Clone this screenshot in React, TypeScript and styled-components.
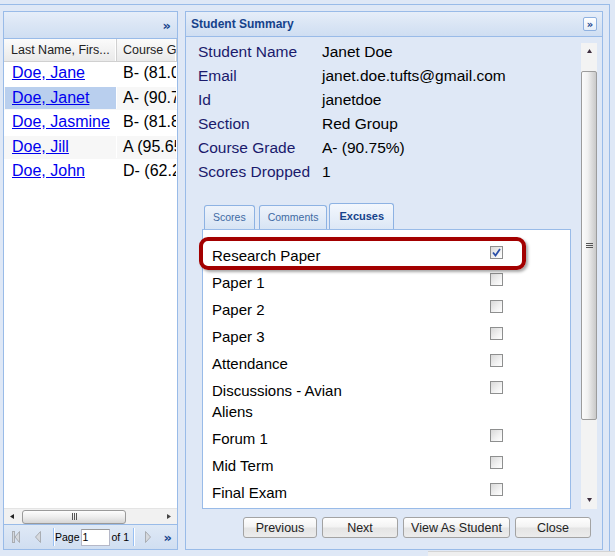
import React from "react";
import styled, { createGlobalStyle } from "styled-components";

const Global = createGlobalStyle`
  html, body { margin: 0; padding: 0; background: #dfe8f6; }
  body { font-family: "Liberation Sans", Arial, sans-serif; }
  * { box-sizing: border-box; }
`;

const Root = styled.div`
  width: 615px;
  height: 556px;
  padding-top: 4px;
  background: #dfe8f6;
  overflow: hidden;
  position: relative;
`;

const Frame = styled.div`
  width: 610px;
  height: 547px;
  border-top: 1px solid #99bbe8;
  border-right: 1px solid #99bbe8;
  display: flex;
  gap: 7px;
  padding: 6px 6px 0 3px;
`;

const StatusStrip = styled.div`
  position: absolute;
  left: 428px;
  right: 0;
  top: 551px;
  bottom: 0;
  background: #efefef;
  border-top: 1px solid #d4d4d4;
`;

const Panel = styled.div<{ $w?: number }>`
  display: flex;
  flex-direction: column;
  height: 539px;
  ${(p) => (p.$w ? `width: ${p.$w}px; flex: none;` : `flex: 1;`)}
  border: 1px solid #99bbe8;
  background: #dfe8f6;
  overflow: hidden;
`;

const PanelHeader = styled.div<{ $h: number; $pr: number }>`
  flex: none;
  height: ${(p) => p.$h}px;
  display: flex;
  align-items: center;
  justify-content: space-between;
  padding: 0 ${(p) => p.$pr}px 0 5px;
  border-bottom: 1px solid #99bbe8;
  background: linear-gradient(#e6eef9 0%, #dbe6f5 45%, #cfdef2 100%);
`;

const HeaderTitle = styled.span`
  font-size: 12px;
  font-weight: bold;
  color: #15428b;
`;

const Chevrons = styled.span`
  font-size: 13px;
  font-weight: bold;
  color: #15428b;
  letter-spacing: -2px;
  line-height: 1;
  font-family: "DejaVu Sans", sans-serif;
`;

const ToolBtn = styled.span`
  width: 14px;
  height: 14px;
  border: 1px solid #8fb1e0;
  border-radius: 2px;
  background: linear-gradient(#ffffff, #e6eef9);
  display: flex;
  align-items: center;
  justify-content: center;
  font-size: 10px;
  font-weight: bold;
  color: #15428b;
  letter-spacing: -2px;
  padding-right: 2px;
  font-family: "DejaVu Sans", sans-serif;
`;

/* ---------- left grid ---------- */

const GridHeader = styled.div`
  flex: none;
  height: 23px;
  display: flex;
  border-bottom: 1px solid #d0d0d0;
  background: linear-gradient(#fbfbfb, #e9e9e9);
`;

const HeadCell = styled.div<{ $w: number; $pl: number }>`
  flex: none;
  width: ${(p) => p.$w}px;
  padding-left: ${(p) => p.$pl}px;
  font-size: 12.5px;
  color: #222;
  line-height: 22px;
  white-space: nowrap;
  overflow: hidden;
  border-right: 1px solid #d0d0d0;
  box-shadow: inset -1px 0 0 #fff;
`;

const GridBody = styled.div`
  flex: 1;
  background: #fff;
  overflow: hidden;
`;

const GridRow = styled.div<{ $alt: boolean }>`
  height: 24.5px;
  display: flex;
  background: ${(p) => (p.$alt ? "#f7f7f7" : "#fff")};
  border-bottom: 1px solid #fff;
`;

const Cell = styled.div<{ $w: number; $sel?: boolean; $pl: number }>`
  flex: none;
  width: ${(p) => p.$w}px;
  height: 22.5px;
  padding: 1px 0 0 ${(p) => p.$pl}px;
  font-size: 16px;
  line-height: 20px;
  white-space: nowrap;
  overflow: hidden;
  color: #000;
  border-right: 1px solid #fff;
  background: ${(p) => (p.$sel ? "#b9cfee" : "transparent")};
  margin-left: 1px;
`;

const NameLink = styled.a`
  color: #0000ee;
  text-decoration: underline;
  cursor: pointer;
`;

const HScroll = styled.div`
  flex: none;
  height: 16px;
  display: flex;
  align-items: center;
  background: #f1f1f1;
  border-top: 1px solid #e4e4e4;
`;

const ArrowBox = styled.div<{ $w: number; $h: number }>`
  flex: none;
  width: ${(p) => p.$w}px;
  height: ${(p) => p.$h}px;
  display: flex;
  align-items: center;
  justify-content: center;
`;

const HTrack = styled.div`
  flex: 1;
  height: 100%;
  display: flex;
  align-items: center;
`;

const HThumb = styled.div`
  margin-left: 2px;
  width: 104px;
  height: 14px;
  border: 1px solid #9a9a9a;
  border-radius: 3px;
  background: linear-gradient(#fdfdfd 0%, #ededed 50%, #d6d6d6 100%);
  display: flex;
  align-items: center;
  justify-content: center;
`;

const Grip = styled.span<{ $vertical?: boolean }>`
  display: flex;
  flex-direction: ${(p) => (p.$vertical ? "column" : "row")};
  gap: 1px;
  & > i {
    display: block;
    background: #555;
    width: ${(p) => (p.$vertical ? "7px" : "1px")};
    height: ${(p) => (p.$vertical ? "1px" : "7px")};
  }
`;

const PagingBar = styled.div`
  flex: none;
  height: 25px;
  display: flex;
  align-items: center;
  padding-left: 8px;
  border-top: 1px solid #99bbe8;
  background: linear-gradient(#dfe9f6, #d0def1);
  font-size: 10.5px;
  color: #000;
`;

const PageIcon = styled.span<{ $ml?: number; $mr?: number }>`
  display: flex;
  margin-left: ${(p) => p.$ml ?? 0}px;
  margin-right: ${(p) => p.$mr ?? 0}px;
`;

const Sep = styled.span<{ $ml?: number; $mr?: number }>`
  width: 2px;
  height: 18px;
  margin-left: ${(p) => p.$ml ?? 0}px;
  margin-right: ${(p) => p.$mr ?? 0}px;
  border-left: 1px solid #98c0f4;
  border-right: 1px solid #fff;
`;

const PageInput = styled.span`
  width: 29px;
  height: 17px;
  margin-left: 1px;
  background: #fff;
  border: 1px solid #b5b8c8;
  border-top-color: #999;
  line-height: 15px;
  padding-left: 1px;
  font-size: 10.5px;
`;

const PageText = styled.span<{ $ml?: number }>`
  margin-left: ${(p) => p.$ml ?? 0}px;
`;

const PushRight = styled.span`
  margin-left: auto;
  margin-right: 7px;
`;

/* ---------- right panel ---------- */

const RightBody = styled.div`
  flex: 1;
  display: flex;
  flex-direction: column;
  padding-top: 3px;
`;

const ScrollArea = styled.div`
  flex: none;
  height: 469px;
  display: flex;
`;

const Content = styled.div`
  flex: 1;
  padding-left: 12px;
  overflow: hidden;
`;

const InfoGrid = styled.div`
  display: grid;
  grid-template-columns: 124px 1fr;
  grid-auto-rows: 24px;
  font-size: 15.5px;
  line-height: 24px;
`;

const InfoLabel = styled.div`
  color: #1a1a6c;
  white-space: nowrap;
`;

const InfoValue = styled.div`
  color: #000;
  white-space: nowrap;
`;

const TabWrap = styled.div`
  margin-top: 19px;
  margin-left: 4px;
  width: 369px;
`;

const TabStrip = styled.div`
  height: 26px;
  display: flex;
  align-items: flex-end;
  padding-left: 2px;
  gap: 4px;
`;

const Tab = styled.div<{ $active?: boolean }>`
  height: ${(p) => (p.$active ? 26 : 24)}px;
  padding: 0 ${(p) => (p.$active ? 9 : 8)}px;
  margin-left: ${(p) => (p.$active ? -2 : 0)}px;
  border: 1px solid #8db2e3;
  border-bottom: none;
  border-radius: 3px 3px 0 0;
  background: ${(p) =>
    p.$active
      ? "linear-gradient(#f3f7fd, #dce7f6)"
      : "linear-gradient(#eef3fb, #d7e4f4)"};
  font-size: ${(p) => (p.$active ? 11 : 10.5)}px;
  font-weight: ${(p) => (p.$active ? "bold" : "normal")};
  color: ${(p) => (p.$active ? "#15428b" : "#416aa3")};
  line-height: ${(p) => (p.$active ? 25 : 23)}px;
  white-space: nowrap;
`;

const TabBody = styled.div`
  position: relative;
  height: 280px;
  background: #fff;
  border: 1px solid #99bbe8;
  padding: 12px 0 0 9px;
`;

const CheckRow = styled.div`
  display: grid;
  grid-template-columns: 278px 13px;
  padding: 3px 0;
  font-size: 15px;
  line-height: 21px;
  color: #000;
`;

const CheckLabel = styled.span`
  max-width: 150px;
`;

const CheckBox = styled.span`
  width: 13px;
  height: 13px;
  margin-top: 1px;
  border: 1px solid #8e8f8f;
  background: linear-gradient(135deg, #d9d9d9 0%, #f2f2f2 60%, #ffffff 100%);
  display: flex;
  align-items: center;
  justify-content: center;
`;

const Highlight = styled.div`
  position: absolute;
  left: -4px;
  top: 7px;
  width: 327px;
  height: 33px;
  border: 4px solid #a30000;
  border-radius: 9px;
  box-shadow: 2px 2px 3px rgba(0, 0, 0, 0.35);
  pointer-events: none;
`;

const VScroll = styled.div`
  flex: none;
  width: 16px;
  margin: 3px 5px 0 0;
  display: flex;
  flex-direction: column;
  background: #f3f3f3;
`;

const VTrack = styled.div`
  flex: 1;
`;

const VThumb = styled.div`
  margin-top: 11px;
  height: 349px;
  border: 1px solid #9c9c9c;
  border-radius: 2px;
  background: linear-gradient(90deg, #fbfbfb 0%, #f1f1f1 40%, #dcdcdc 70%, #c9c9c9 100%);
  display: flex;
  align-items: center;
  justify-content: center;
`;

const Footer = styled.div`
  flex: 1;
  display: flex;
  justify-content: flex-end;
  align-items: flex-start;
  gap: 5px;
  padding: 8px 11px 0 0;
`;

const Button = styled.button<{ $w: number }>`
  width: ${(p) => p.$w}px;
  height: 21px;
  padding: 2px 0 0;
  border: 1px solid #a3a3a3;
  border-radius: 3px;
  background: linear-gradient(#fefefe 0%, #f3f3f3 48%, #e4e4e4 52%, #ececec 100%);
  font-family: "Liberation Sans", Arial, sans-serif;
  font-size: 12.5px;
  color: #222;
  line-height: 17px;
`;

const Tri = ({ dir, color = "#333", size = 5 }: { dir: "up" | "down" | "left" | "right"; color?: string; size?: number }) => {
  const s = size;
  const pts =
    dir === "up"
      ? `0,${s - 1} ${s},${s - 1} ${s / 2},0`
      : dir === "down"
      ? `0,0 ${s},0 ${s / 2},${s - 1}`
      : dir === "left"
      ? `${s - 1},0 ${s - 1},${s} 0,${s / 2}`
      : `0,0 0,${s} ${s - 1},${s / 2}`;
  return (
    <svg width={s} height={s} viewBox={`0 0 ${s} ${s}`}>
      <polygon points={pts} fill={color} />
    </svg>
  );
};

const FirstIcon = () => (
  <svg width="8" height="12" viewBox="0 0 8 12">
    <rect x="0.5" y="0.5" width="2" height="11" fill="#d6d9de" stroke="#a9adb3" />
    <polygon points="7.5,0.5 7.5,11.5 3,6" fill="#d6d9de" stroke="#a9adb3" />
  </svg>
);
const PrevIcon = () => (
  <svg width="6" height="12" viewBox="0 0 6 12">
    <polygon points="5.5,0.5 5.5,11.5 0.5,6" fill="#d6d9de" stroke="#a9adb3" />
  </svg>
);
const NextIcon = () => (
  <svg width="6" height="12" viewBox="0 0 6 12">
    <polygon points="0.5,0.5 0.5,11.5 5.5,6" fill="#d6d9de" stroke="#a9adb3" />
  </svg>
);

const CheckMark = () => (
  <svg width="9" height="9" viewBox="0 0 9 9">
    <path d="M1 4.5 L3.5 7.5 L8 1" fill="none" stroke="#2b4fa8" strokeWidth="1.8" />
  </svg>
);

const students = [
  { name: "Doe, Jane", grade: "B- (81.04%)" },
  { name: "Doe, Janet", grade: "A- (90.75%)", sel: true },
  { name: "Doe, Jasmine", grade: "B- (81.85%)" },
  { name: "Doe, Jill", grade: "A (95.65%)" },
  { name: "Doe, John", grade: "D- (62.25%)" },
];

const info: [string, string][] = [
  ["Student Name", "Janet Doe"],
  ["Email", "janet.doe.tufts@gmail.com"],
  ["Id", "janetdoe"],
  ["Section", "Red Group"],
  ["Course Grade", "A- (90.75%)"],
  ["Scores Dropped", "1"],
];

const excuses: { label: string; checked?: boolean }[] = [
  { label: "Research Paper", checked: true },
  { label: "Paper 1" },
  { label: "Paper 2" },
  { label: "Paper 3" },
  { label: "Attendance" },
  { label: "Discussions - Avian Aliens" },
  { label: "Forum 1" },
  { label: "Mid Term" },
  { label: "Final Exam" },
];

export default function App() {
  return (
    <>
      <Global />
      <Root>
        <Frame>
          <Panel $w={175}>
            <PanelHeader $h={27} $pr={8}>
              <span />
              <Chevrons>»</Chevrons>
            </PanelHeader>
            <GridHeader>
              <HeadCell $w={113} $pl={7}>Last Name, Firs...</HeadCell>
              <HeadCell $w={60} $pl={6}>Course Grade</HeadCell>
            </GridHeader>
            <GridBody>
              {students.map((s, i) => (
                <GridRow key={s.name} $alt={i % 2 === 1}>
                  <Cell $w={112} $pl={7} $sel={s.sel}>
                    <NameLink>{s.name}</NameLink>
                  </Cell>
                  <Cell $w={59} $pl={5}>{s.grade}</Cell>
                </GridRow>
              ))}
            </GridBody>
            <HScroll>
              <ArrowBox $w={16} $h={14}>
                <Tri dir="left" color="#222" />
              </ArrowBox>
              <HTrack>
                <HThumb>
                  <Grip>
                    <i />
                    <i />
                    <i />
                  </Grip>
                </HThumb>
              </HTrack>
              <ArrowBox $w={16} $h={14}>
                <Tri dir="right" color="#444" />
              </ArrowBox>
            </HScroll>
            <PagingBar>
              <PageIcon $mr={15}>
                <FirstIcon />
              </PageIcon>
              <PageIcon $mr={12}>
                <PrevIcon />
              </PageIcon>
              <Sep />
              <PageText>Page</PageText>
              <PageInput>1</PageInput>
              <PageText $ml={2}>of 1</PageText>
              <Sep $ml={4} />
              <PageIcon $ml={10}>
                <NextIcon />
              </PageIcon>
              <PushRight>
                <Chevrons>»</Chevrons>
              </PushRight>
            </PagingBar>
          </Panel>

          <Panel>
            <PanelHeader $h={25} $pr={5}>
              <HeaderTitle>Student Summary</HeaderTitle>
              <ToolBtn>»</ToolBtn>
            </PanelHeader>
            <RightBody>
              <ScrollArea>
                <Content>
                  <InfoGrid>
                    {info.map(([k, v]) => (
                      <React.Fragment key={k}>
                        <InfoLabel>{k}</InfoLabel>
                        <InfoValue>{v}</InfoValue>
                      </React.Fragment>
                    ))}
                  </InfoGrid>
                  <TabWrap>
                    <TabStrip>
                      <Tab>Scores</Tab>
                      <Tab>Comments</Tab>
                      <Tab $active>Excuses</Tab>
                    </TabStrip>
                    <TabBody>
                      <Highlight />
                      {excuses.map((e) => (
                        <CheckRow key={e.label}>
                          <CheckLabel>{e.label}</CheckLabel>
                          <CheckBox>{e.checked && <CheckMark />}</CheckBox>
                        </CheckRow>
                      ))}
                    </TabBody>
                  </TabWrap>
                </Content>
                <VScroll>
                  <ArrowBox $w={16} $h={17}>
                    <Tri dir="up" color="#3f2f3f" />
                  </ArrowBox>
                  <VTrack>
                    <VThumb>
                      <Grip $vertical>
                        <i />
                        <i />
                        <i />
                      </Grip>
                    </VThumb>
                  </VTrack>
                  <ArrowBox $w={16} $h={17}>
                    <Tri dir="down" color="#3f2f3f" />
                  </ArrowBox>
                </VScroll>
              </ScrollArea>
              <Footer>
                <Button $w={74}>Previous</Button>
                <Button $w={76}>Next</Button>
                <Button $w={107}>View As Student</Button>
                <Button $w={76}>Close</Button>
              </Footer>
            </RightBody>
          </Panel>
        </Frame>
        <StatusStrip />
      </Root>
    </>
  );
}
